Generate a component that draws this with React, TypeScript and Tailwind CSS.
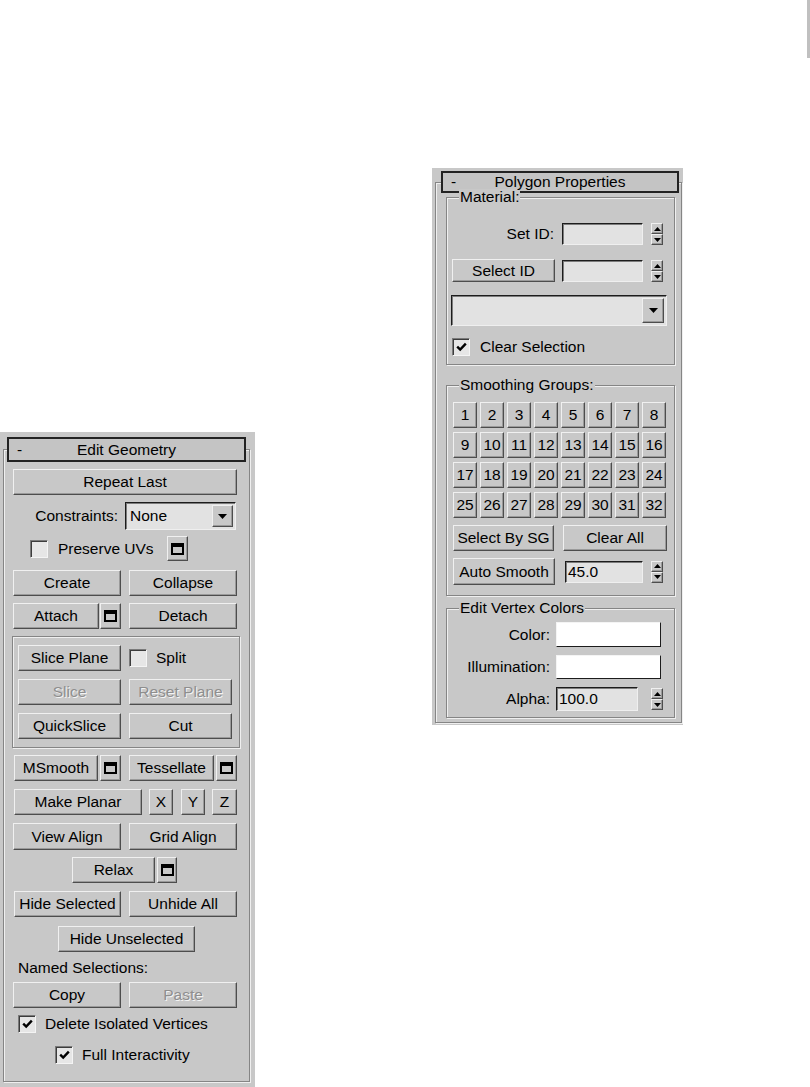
import type { ReactNode } from "react";

const raised = [
  "border border-t-[#f0f0f0] border-l-[#f0f0f0] border-r-[#4d4d4d] border-b-[#4d4d4d]",
  "bg-[#c8c8c8] shadow-[inset_-1px_-1px_0_#9a9a9a]",
].join(" ");

const sunken = [
  "border border-t-[#1c1c1c] border-l-[#1c1c1c] border-r-[#efefef] border-b-[#efefef]",
  "bg-[#e2e2e2] shadow-[inset_1px_1px_0_#7c7c7c]",
].join(" ");

const etched = "border border-[#858585] shadow-[inset_1px_1px_0_#efefef,1px_1px_0_#efefef]";

function Btn({ className = "", disabled = false, children }: { className?: string; disabled?: boolean; children?: ReactNode }) {
  return (
    <button
      type="button"
      className={`flex shrink-0 items-center justify-center whitespace-nowrap leading-none ${raised} ${
        disabled ? "text-[#8e8e8e] [text-shadow:1px_1px_0_#f4f4f4]" : "text-black"
      } ${className}`}
    >
      {children}
    </button>
  );
}

function SettingsBtn({ className = "" }: { className?: string }) {
  return (
    <Btn className={className}>
      <span className="block h-[12px] w-[13px] border-2 border-t-4 border-black" />
    </Btn>
  );
}

function Check({ checked = false }: { checked?: boolean }) {
  return (
    <span
      className={[
        "flex h-[18px] w-[18px] shrink-0 items-center justify-center bg-[#e6e6e6]",
        "border border-t-[#7a7a7a] border-l-[#7a7a7a] border-r-[#f4f4f4] border-b-[#f4f4f4]",
        "shadow-[inset_1px_1px_0_#3c3c3c]",
      ].join(" ")}
    >
      {checked && (
        <svg width="11" height="10" viewBox="0 0 11 10">
          <path d="M1.2 4.6 4.2 7.6 9.8 1.6" stroke="#000" strokeWidth="2.4" fill="none" />
        </svg>
      )}
    </span>
  );
}

function Spinner() {
  return (
    <div className="flex h-[22px] w-[12px] shrink-0 flex-col">
      <div className={`flex h-[11px] items-center justify-center ${raised}`}>
        <svg width="7" height="4" viewBox="0 0 7 4">
          <path d="M3.5 0 7 4H0z" fill="#000" />
        </svg>
      </div>
      <div className={`flex h-[11px] items-center justify-center ${raised}`}>
        <svg width="7" height="4" viewBox="0 0 7 4">
          <path d="M0 0h7L3.5 4z" fill="#000" />
        </svg>
      </div>
    </div>
  );
}

function DropArrow({ className = "" }: { className?: string }) {
  return (
    <div className={`flex shrink-0 items-center justify-center ${raised} ${className}`}>
      <svg width="9" height="5" viewBox="0 0 9 5">
        <path d="M0 0h9L4.5 5z" fill="#000" />
      </svg>
    </div>
  );
}

function TitleBar({ title, className = "" }: { title: string; className?: string }) {
  return (
    <legend className={`block border-2 border-[#222] bg-[#c4c4c4] ${className}`}>
      <div className="grid h-full grid-cols-[30px_1fr_30px] items-center leading-none">
        <span className="pl-[8px]">-</span>
        <span className="text-center">{title}</span>
        <span />
      </div>
    </legend>
  );
}

function GroupLegend({ children }: { children: ReactNode }) {
  return <legend className="ml-[12px] bg-[#c8c8c8] px-[1px] leading-[16px]">{children}</legend>;
}

function EditGeometry() {
  return (
    <div className="mt-[432px] h-[655px] w-[255px] shrink-0 bg-[#c8c8c8] pt-[5px]">
      <fieldset className={`ml-[3px] w-[247px] pb-[16px] ${etched}`}>
        <TitleBar title="Edit Geometry" className="ml-[3px] h-[25px] w-[239px]" />

        <div className="ml-[9px] mt-[7px] flex">
          <Btn className="h-[26px] w-[224px]">Repeat Last</Btn>
        </div>

        <div className="mt-[7px] flex h-[28px] items-center">
          <span className="w-[114px] text-right">Constraints:</span>
          <div className={`ml-[7px] flex h-[28px] w-[111px] items-center ${sunken}`}>
            <span className="pl-[4px]">None</span>
            <DropArrow className="ml-auto mr-[2px] h-[22px] w-[21px]" />
          </div>
        </div>

        <div className="mt-[6px] flex h-[25px] items-center">
          <div className="flex w-[163px] items-center pl-[26px]">
            <Check />
            <span className="ml-[10px]">Preserve UVs</span>
          </div>
          <SettingsBtn className="h-[25px] w-[21px]" />
        </div>

        <div className="ml-[9px] mt-[9px] flex gap-[8px]">
          <Btn className="h-[26px] w-[108px]">Create</Btn>
          <Btn className="h-[26px] w-[108px]">Collapse</Btn>
        </div>

        <div className="ml-[9px] mt-[7px] flex">
          <Btn className="h-[26px] w-[86px]">Attach</Btn>
          <SettingsBtn className="ml-[1px] h-[26px] w-[21px]" />
          <Btn className="ml-[8px] h-[26px] w-[108px]">Detach</Btn>
        </div>

        <div className={`ml-[8px] mt-[7px] flex h-[112px] w-[228px] flex-col pl-[5px] pt-[8px] ${etched}`}>
          <div className="flex h-[26px] items-center">
            <Btn className="h-[26px] w-[103px]">Slice Plane</Btn>
            <span className="ml-[8px]">
              <Check />
            </span>
            <span className="ml-[9px]">Split</span>
          </div>
          <div className="mt-[8px] flex gap-[8px]">
            <Btn disabled className="h-[26px] w-[103px]">Slice</Btn>
            <Btn disabled className="h-[26px] w-[103px]">Reset Plane</Btn>
          </div>
          <div className="mt-[8px] flex gap-[8px]">
            <Btn className="h-[26px] w-[103px]">QuickSlice</Btn>
            <Btn className="h-[26px] w-[103px]">Cut</Btn>
          </div>
        </div>

        <div className="ml-[10px] mt-[7px] flex">
          <Btn className="h-[26px] w-[84px]">MSmooth</Btn>
          <SettingsBtn className="ml-[2px] h-[26px] w-[21px]" />
          <Btn className="ml-[8px] h-[26px] w-[85px]">Tessellate</Btn>
          <SettingsBtn className="ml-[2px] h-[26px] w-[21px]" />
        </div>

        <div className="ml-[10px] mt-[8px] flex">
          <Btn className="h-[26px] w-[128px]">Make Planar</Btn>
          <Btn className="ml-[7px] h-[26px] w-[24px]">X</Btn>
          <Btn className="ml-[8px] h-[26px] w-[24px]">Y</Btn>
          <Btn className="ml-[7px] h-[26px] w-[25px]">Z</Btn>
        </div>

        <div className="ml-[9px] mt-[8px] flex gap-[8px]">
          <Btn className="h-[27px] w-[108px]">View Align</Btn>
          <Btn className="h-[27px] w-[108px]">Grid Align</Btn>
        </div>

        <div className="ml-[68px] mt-[7px] flex">
          <Btn className="h-[26px] w-[83px]">Relax</Btn>
          <SettingsBtn className="ml-[2px] h-[26px] w-[20px]" />
        </div>

        <div className="ml-[10px] mt-[8px] flex">
          <Btn className="h-[26px] w-[107px]">Hide Selected</Btn>
          <Btn className="ml-[8px] h-[26px] w-[108px]">Unhide All</Btn>
        </div>

        <div className="ml-[54px] mt-[9px] flex">
          <Btn className="h-[26px] w-[137px]">Hide Unselected</Btn>
        </div>

        <div className="mt-[6px] flex h-[20px] items-center pl-[14px]">Named Selections:</div>

        <div className="ml-[9px] mt-[4px] flex gap-[8px]">
          <Btn className="h-[26px] w-[108px]">Copy</Btn>
          <Btn disabled className="h-[26px] w-[108px]">Paste</Btn>
        </div>

        <div className="mt-[6px] flex h-[20px] items-center pl-[14px]">
          <Check checked />
          <span className="ml-[9px]">Delete Isolated Vertices</span>
        </div>

        <div className="mt-[11px] flex h-[20px] items-center pl-[51px]">
          <Check checked />
          <span className="ml-[9px]">Full Interactivity</span>
        </div>
      </fieldset>
    </div>
  );
}

const groups = Array.from({ length: 32 }, (_, i) => i + 1);

function PolygonProperties() {
  return (
    <div className="ml-[177px] mt-[168px] h-[557px] w-[251px] shrink-0 bg-[#c8c8c8] pt-[3px]">
      <fieldset className={`ml-[3px] w-[247px] pb-[4px] ${etched}`}>
        <TitleBar title="Polygon Properties" className="ml-[5px] h-[22px] w-[238px]" />

        <fieldset className={`-mt-[4px] ml-[10px] w-[229px] pb-[7px] ${etched}`}>
          <GroupLegend>Material:</GroupLegend>
          <div className="mt-[18px] flex h-[22px] items-center">
            <span className="w-[107px] text-right">Set ID:</span>
            <div className={`ml-[8px] h-[22px] w-[81px] ${sunken}`} />
            <span className="ml-[8px]">
              <Spinner />
            </span>
          </div>
          <div className="mt-[14px] flex h-[23px] items-end">
            <Btn className="ml-[5px] h-[23px] w-[103px]">Select ID</Btn>
            <div className={`ml-[7px] h-[22px] w-[81px] ${sunken}`} />
            <span className="ml-[8px]">
              <Spinner />
            </span>
          </div>
          <div className={`ml-[4px] mt-[13px] flex h-[31px] w-[216px] items-center ${sunken}`}>
            <DropArrow className="ml-auto mr-[2px] h-[25px] w-[22px]" />
          </div>
          <div className="mt-[11px] flex h-[20px] items-center pl-[5px]">
            <Check checked />
            <span className="ml-[10px]">Clear Selection</span>
          </div>
        </fieldset>

        <fieldset className={`ml-[10px] mt-[12px] w-[229px] pb-[10px] ${etched}`}>
          <GroupLegend>Smoothing Groups:</GroupLegend>
          <div className="ml-[6px] mt-[9px] grid w-[213px] grid-cols-8 gap-x-[3px] gap-y-[4px]">
            {groups.map((n) => (
              <Btn key={n} className="h-[26px] w-[24px]">
                {n}
              </Btn>
            ))}
          </div>
          <div className="ml-[6px] mt-[7px] flex">
            <Btn className="h-[26px] w-[101px]">Select By SG</Btn>
            <Btn className="ml-[9px] h-[26px] w-[104px]">Clear All</Btn>
          </div>
          <div className="ml-[6px] mt-[7px] flex h-[27px] items-center">
            <Btn className="h-[27px] w-[102px]">Auto Smooth</Btn>
            <div className={`ml-[10px] flex h-[22px] w-[78px] items-center pl-[2px] leading-none ${sunken}`}>45.0</div>
            <span className="ml-[8px]">
              <Spinner />
            </span>
          </div>
        </fieldset>

        <fieldset className={`ml-[10px] mt-[4px] w-[229px] pb-[6px] ${etched}`}>
          <GroupLegend>Edit Vertex Colors</GroupLegend>
          <div className="mt-[6px] flex h-[25px] items-center">
            <span className="w-[103px] text-right">Color:</span>
            <div className="ml-[6px] h-[25px] w-[105px] border border-t-[#f4f4f4] border-l-[#f4f4f4] border-r-[#1c1c1c] border-b-[#1c1c1c] bg-white" />
          </div>
          <div className="mt-[8px] flex h-[24px] items-center">
            <span className="w-[103px] text-right">Illumination:</span>
            <div className="ml-[6px] h-[24px] w-[105px] border border-t-[#f4f4f4] border-l-[#f4f4f4] border-r-[#1c1c1c] border-b-[#1c1c1c] bg-white" />
          </div>
          <div className="mt-[8px] flex h-[24px] items-center">
            <span className="w-[103px] text-right">Alpha:</span>
            <div className={`ml-[6px] flex h-[24px] w-[82px] items-center pl-[2px] leading-none ${sunken}`}>100.0</div>
            <span className="ml-[13px]">
              <Spinner />
            </span>
          </div>
        </fieldset>
      </fieldset>
    </div>
  );
}

export default function App() {
  return (
    <div className="flex h-[1087px] w-[810px] items-start overflow-hidden bg-white font-['Liberation_Sans',Arial,sans-serif] text-[15.5px] text-black">
      <EditGeometry />
      <PolygonProperties />
      <div className="ml-auto h-[58px] w-[3px] shrink-0 bg-[#c0c0c0]" />
    </div>
  );
}
